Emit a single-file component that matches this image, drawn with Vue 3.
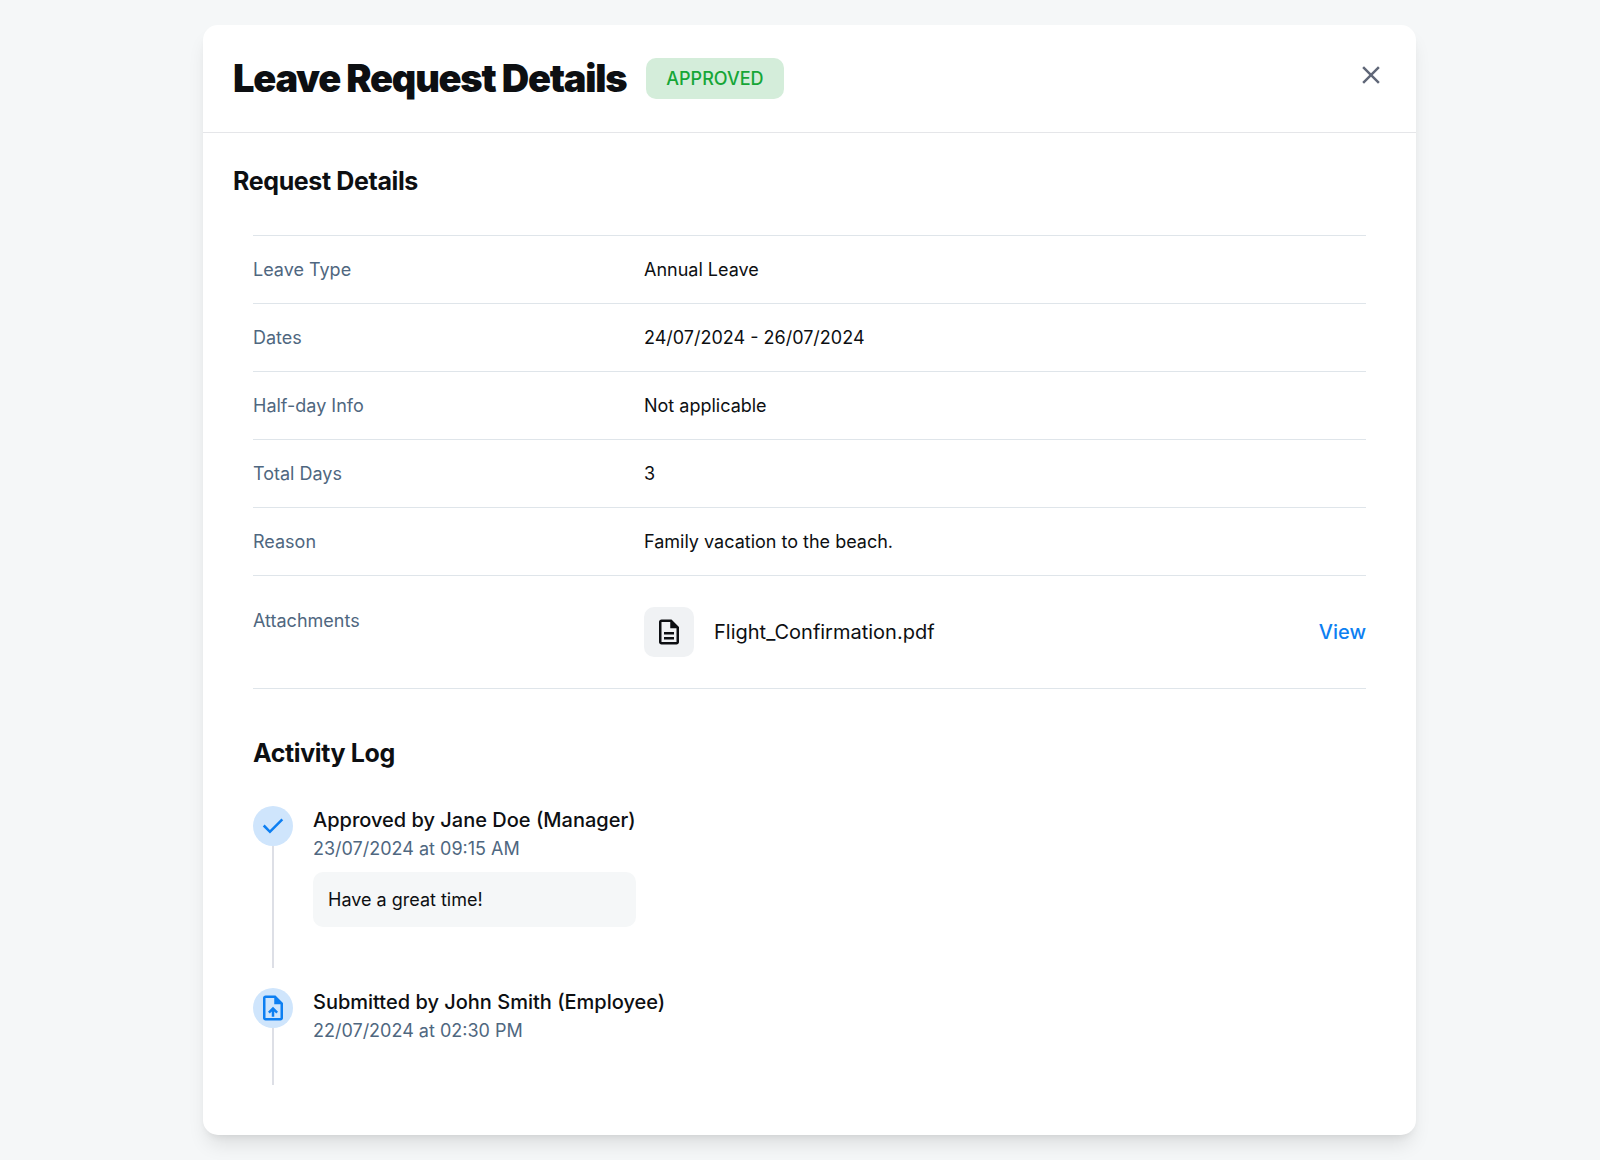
<script setup>
const details = [
  { label: 'Leave Type', value: 'Annual Leave' },
  { label: 'Dates', value: '24/07/2024 - 26/07/2024' },
  { label: 'Half-day Info', value: 'Not applicable' },
  { label: 'Total Days', value: '3' },
  { label: 'Reason', value: 'Family vacation to the beach.' },
]

const activities = [
  {
    icon: 'M382-240 154-468l57-57 171 171 367-367 57 57-424 424Z',
    title: 'Approved by Jane Doe (Manager)',
    time: '23/07/2024 at 09:15 AM',
    comment: 'Have a great time!',
  },
  {
    icon: 'M440-200h80v-167l64 64 56-57-160-160-160 160 57 56 63-63v167ZM240-80q-33 0-56.500-23.500T160-160v-640q0-33 23.500-56.500T240-880h320l240 240v480q0 33-23.500 56.500T720-80H240Zm280-520v-200H240v640h480v-440H520Z',
    title: 'Submitted by John Smith (Employee)',
    time: '22/07/2024 at 02:30 PM',
  },
]
</script>

<template>
  <div class="page">
    <main class="card">
      <header class="card-header">
        <div class="heading">
          <h1>Leave Request Details</h1>
          <span class="badge">APPROVED</span>
        </div>
        <button class="close" type="button" aria-label="Close">
          <svg viewBox="0 -960 960 960" aria-hidden="true">
            <path d="m256-200-56-56 224-224-224-224 56-56 224 224 224-224 56 56-224 224 224 224-56 56-224-224-224 224Z" />
          </svg>
        </button>
      </header>

      <section class="request">
        <h2>Request Details</h2>
        <dl class="details">
          <div v-for="item in details" :key="item.label" class="row">
            <dt>{{ item.label }}</dt>
            <dd>{{ item.value }}</dd>
          </div>
          <div class="row row-attachments">
            <dt>Attachments</dt>
            <dd class="attachment">
              <span class="file-icon">
                <svg viewBox="0 -960 960 960" aria-hidden="true">
                  <path d="M320-240h320v-80H320v80Zm0-160h320v-80H320v80ZM240-80q-33 0-56.500-23.500T160-160v-640q0-33 23.500-56.500T240-880h320l240 240v480q0 33-23.500 56.500T720-80H240Zm280-520v-200H240v640h480v-440H520Z" />
                </svg>
              </span>
              <span class="file-name">Flight_Confirmation.pdf</span>
              <a href="#">View</a>
            </dd>
          </div>
        </dl>
      </section>

      <section class="activity">
        <h2>Activity Log</h2>
        <ol>
          <li v-for="entry in activities" :key="entry.title">
            <div class="track">
              <span class="dot">
                <svg viewBox="0 -960 960 960" aria-hidden="true"><path :d="entry.icon" /></svg>
              </span>
              <span class="line"></span>
            </div>
            <div class="entry">
              <h3>{{ entry.title }}</h3>
              <time>{{ entry.time }}</time>
              <p v-if="entry.comment">{{ entry.comment }}</p>
            </div>
          </li>
        </ol>
      </section>
    </main>
  </div>
</template>

<style>
body {
  background: #f5f7f8;
}
</style>

<style scoped>
.page {
  box-sizing: border-box;
  padding: 25px 0 25px 19px;
  font-family: Inter, "Liberation Sans", sans-serif;
  font-size: 18px;
  line-height: 27px;
  color: #0d0f12;
}

.card {
  max-width: 1213px;
  margin: 0 auto;
  background: #fff;
  border-radius: 15px;
  box-shadow: 0 13px 19px -4px rgb(0 0 0 / 10%), 0 5px 8px -5px rgb(0 0 0 / 10%);
}

h1, h2, h3, dl, dd, ol, p {
  margin: 0;
}

svg {
  display: block;
  width: 30px;
  height: 30px;
  fill: currentColor;
}

.card-header {
  display: flex;
  justify-content: space-between;
  align-items: flex-start;
  padding: 30px;
  border-bottom: 1px solid #e5e6e9;
}

.heading {
  display: flex;
  align-items: center;
  gap: 20px;
}

h1 {
  font-size: 38px;
  font-weight: 900;
  line-height: 47px;
  letter-spacing: -0.033em;
}

.badge {
  padding: 7px 20px;
  border-radius: 10px;
  background: #d4edda;
  color: #16a637;
  font-weight: 500;
}

.close {
  display: flex;
  align-items: center;
  height: 40px;
  padding: 0;
  border: 0;
  background: none;
  color: #606778;
  cursor: pointer;
}

h2 {
  font-size: 25px;
  font-weight: 700;
  line-height: 32px;
  letter-spacing: -0.015em;
}

.request {
  padding: 32px 30px 0;
}

.details {
  margin: 38px 20px 0;
}

.row {
  display: grid;
  grid-template-columns: 1fr 2fr;
  gap: 30px;
  padding: 20px 0;
  border-top: 1px solid #dfe5ea;
}

dt {
  color: #4f6780;
}

.row-attachments {
  padding: 31px 0;
  border-bottom: 1px solid #dfe5ea;
}

.attachment {
  display: flex;
  align-items: center;
  gap: 20px;
  font-size: 20px;
}

.file-icon {
  display: grid;
  place-items: center;
  width: 50px;
  height: 50px;
  border-radius: 10px;
  background: #f0f2f4;
}

.attachment a {
  margin-left: auto;
  color: #0d7ff2;
  font-weight: 500;
  text-decoration: none;
}

.activity {
  padding: 48px 50px 50px;
}

ol {
  padding: 0;
  margin-top: 37px;
  list-style: none;
}

li {
  display: flex;
  gap: 20px;
}

li + li {
  margin-top: 20px;
}

.track {
  display: flex;
  flex-direction: column;
  align-items: center;
}

.dot {
  display: grid;
  place-items: center;
  width: 40px;
  height: 40px;
  border-radius: 50%;
  background: #cfe5fc;
  color: #0d7ff2;
}

.line {
  flex: 1;
  width: 2px;
  background: #dddfe6;
}

.entry {
  padding-bottom: 41px;
}

h3 {
  font-size: 20px;
  font-weight: 500;
  line-height: 29px;
}

time {
  display: block;
  color: #4f6780;
}

.entry p {
  margin-top: 10px;
  padding: 14px 15px;
  border-radius: 10px;
  background: #f5f7f8;
}
</style>
